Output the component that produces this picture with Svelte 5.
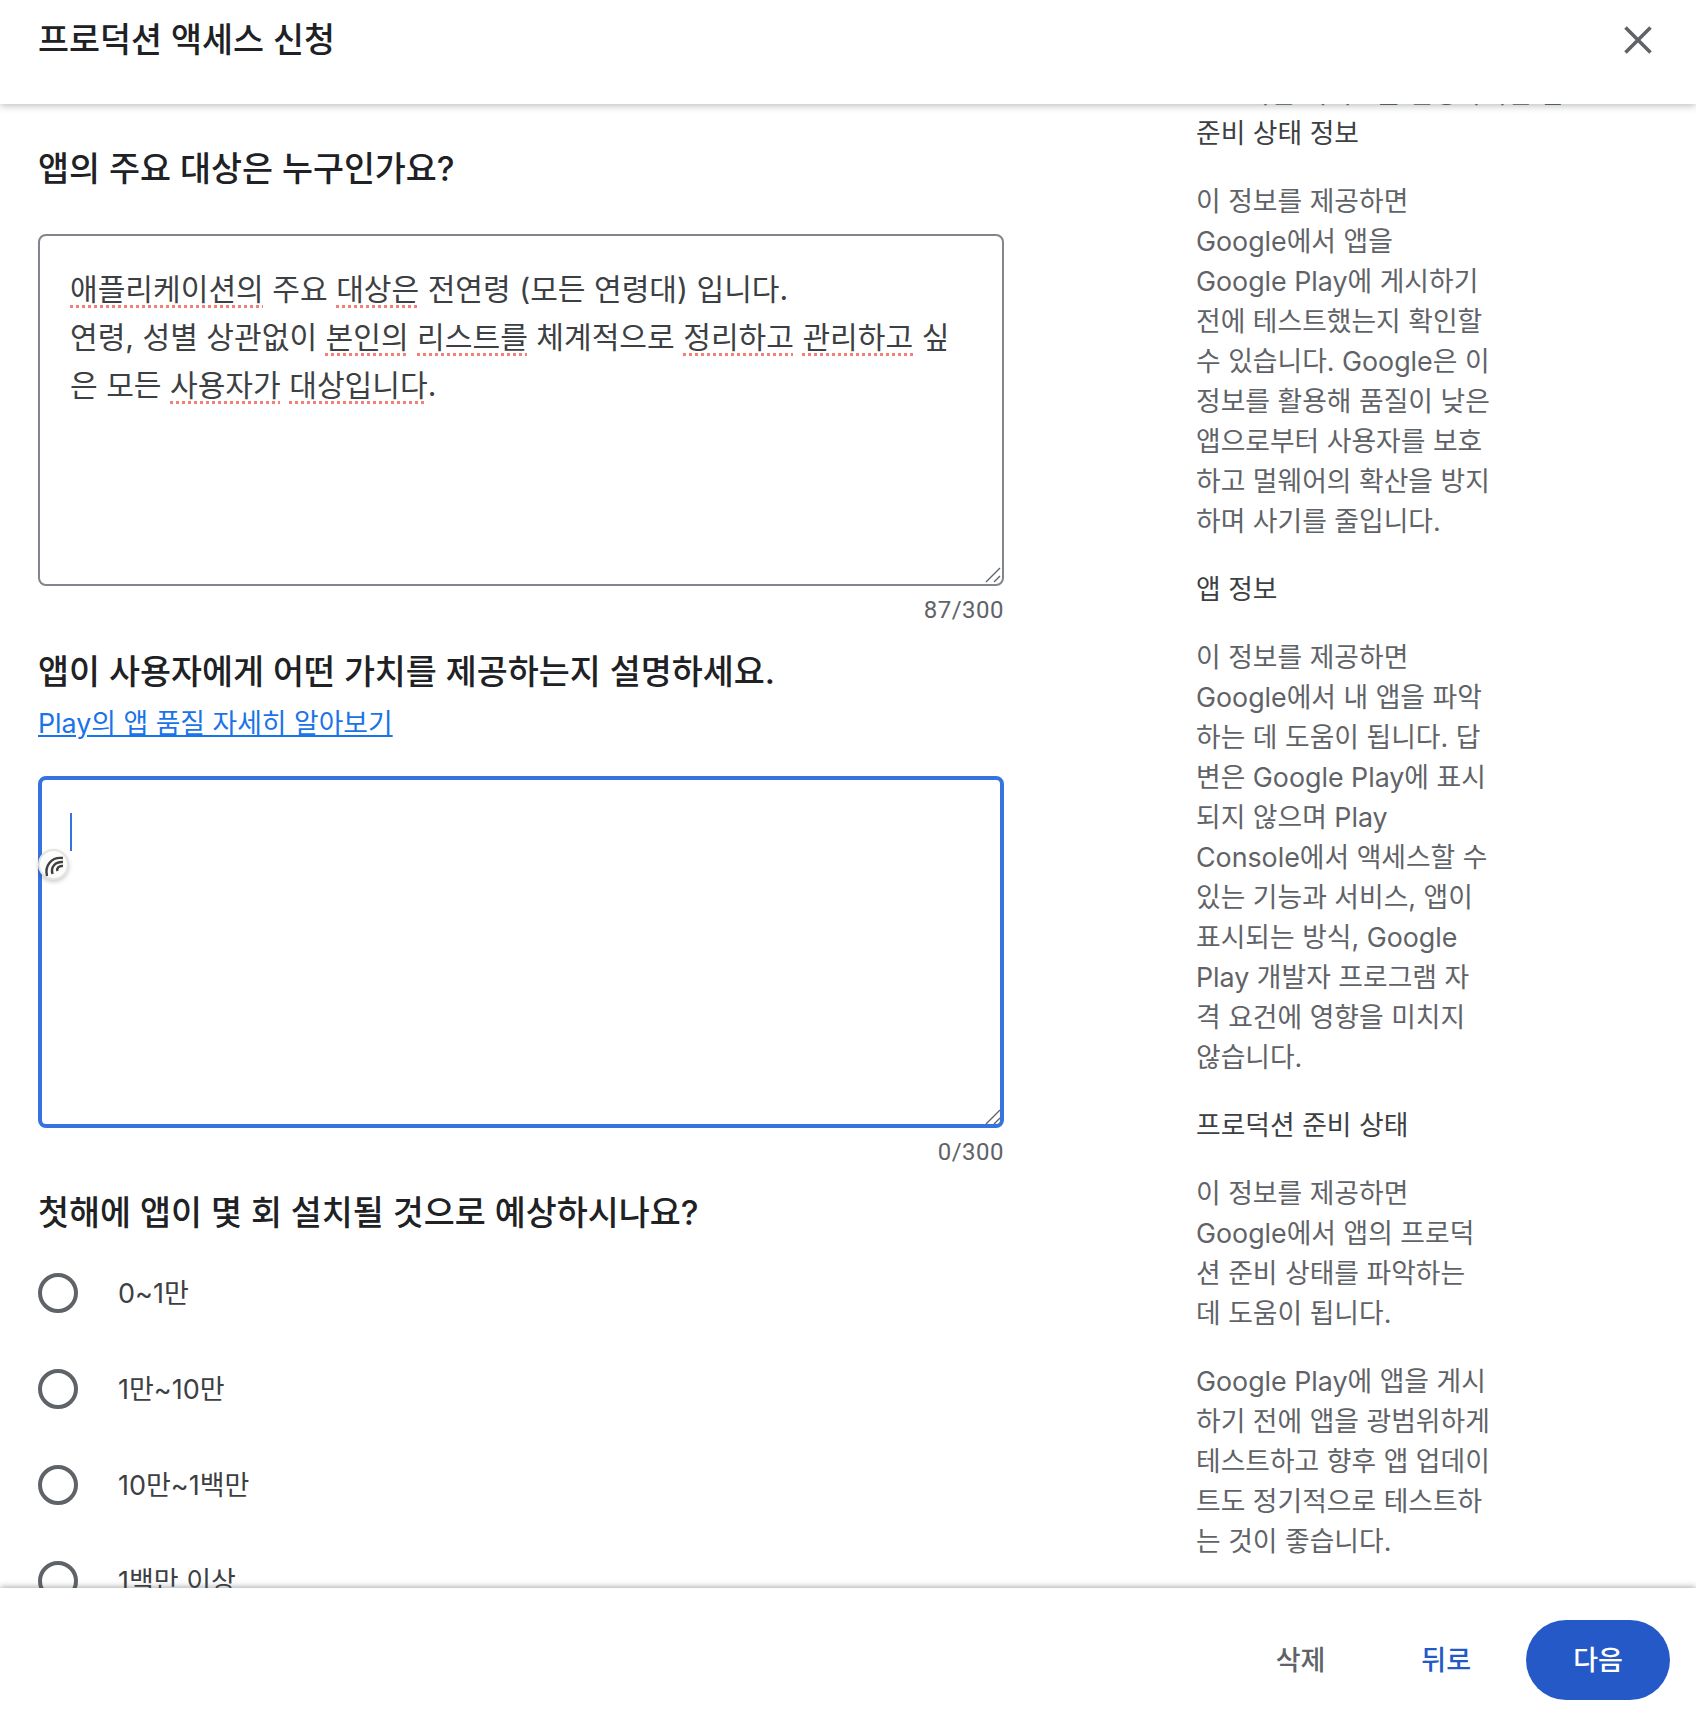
<script>
	const sections = [
		{ title: '준비 상태 정보', paras: [[
			'이 정보를 제공하면', 'Google에서 앱을', 'Google Play에 게시하기', '전에 테스트했는지 확인할',
			'수 있습니다. Google은 이', '정보를 활용해 품질이 낮은', '앱으로부터 사용자를 보호',
			'하고 멀웨어의 확산을 방지', '하며 사기를 줄입니다.'
		]] },
		{ title: '앱 정보', paras: [[
			'이 정보를 제공하면', 'Google에서 내 앱을 파악', '하는 데 도움이 됩니다. 답', '변은 Google Play에 표시',
			'되지 않으며 Play', 'Console에서 액세스할 수', '있는 기능과 서비스, 앱이', '표시되는 방식, Google',
			'Play 개발자 프로그램 자', '격 요건에 영향을 미치지', '않습니다.'
		]] },
		{ title: '프로덕션 준비 상태', paras: [
			['이 정보를 제공하면', 'Google에서 앱의 프로덕', '션 준비 상태를 파악하는', '데 도움이 됩니다.'],
			['Google Play에 앱을 게시', '하기 전에 앱을 광범위하게', '테스트하고 향후 앱 업데이', '트도 정기적으로 테스트하', '는 것이 좋습니다.']
		] }
	];
	const installs = ['0~1만', '1만~10만', '10만~1백만', '1백만 이상'];
</script>

<div class="dialog">
	<header class="top">
		<h1>프로덕션 액세스 신청</h1>
		<button class="close" aria-label="닫기">
			<svg viewBox="0 0 28 28" width="28" height="28"><path d="M1.5 1.5 L26.5 26.5 M26.5 1.5 L1.5 26.5" stroke="#5f6368" stroke-width="3.6" fill="none" /></svg>
		</button>
	</header>

	<main class="body">
		<section class="form">
			<h2 class="first">앱의 주요 대상은 누구인가요?</h2>
			<div class="area">
				<div><span class="sq">애플리케이션의</span> 주요 <span class="sq">대상은</span> 전연령 (모든 연령대) 입니다.</div>
				<div>연령, 성별 상관없이 <span class="sq">본인의</span> <span class="sq">리스트를</span> 체계적으로 <span class="sq">정리하고</span> <span class="sq">관리하고</span> 싶</div>
				<div>은 모든 <span class="sq">사용자가</span> <span class="sq">대상입니다</span>.</div>
				<svg class="grip" viewBox="0 0 16 16" width="16" height="16"><path d="M1 15 L15 1 M9 15 L15 9" stroke="#5f6368" stroke-width="1.4" fill="none" /></svg>
			</div>
			<div class="count">87/300</div>

			<h2 class="second">앱이 사용자에게 어떤 가치를 제공하는지 설명하세요.</h2>
			<a class="link" href="#quality">Play의 앱 품질 자세히 알아보기</a>
			<div class="area focused">
				<span class="caret"></span>
				<span class="badge">
					<svg viewBox="0 0 24 24" width="24" height="24"><path d="M5 23 C2.5 13 9 3.5 21 5 M10.5 21 C8.5 14 13 8.5 21 9 M15.5 18 C14.5 15 17 12.5 21 13" stroke="#404040" stroke-width="2.4" fill="none" /></svg>
				</span>
				<svg class="grip" viewBox="0 0 16 16" width="16" height="16"><path d="M1 15 L15 1 M9 15 L15 9" stroke="#5f6368" stroke-width="1.4" fill="none" /></svg>
			</div>
			<div class="count">0/300</div>

			<h2 class="third">첫해에 앱이 몇 회 설치될 것으로 예상하시나요?</h2>
			<div class="radios">
				{#each installs as label}
					<label class="radio"><span class="ring"></span><span class="txt">{label}</span></label>
				{/each}
			</div>
		</section>

		<aside class="help">
			<p class="cut">프로덕션 액세스를 신청하려면 앱</p>
			{#each sections as s}
				<h3>{s.title}</h3>
				{#each s.paras as lines}
					<p>
						{#each lines as line}<span class="ln">{line}</span>{/each}
					</p>
				{/each}
			{/each}
		</aside>
	</main>

	<footer class="bottom">
		<button class="btn del">삭제</button>
		<button class="btn back">뒤로</button>
		<button class="btn next">다음</button>
	</footer>
</div>

<style>
	:global(body) {
		margin: 0;
		background: #fff;
	}
	.dialog {
		height: 1724px;
		display: flex;
		flex-direction: column;
		overflow: hidden;
		background: #fff;
		color: #202124;
		font-family: Inter, 'Noto Sans CJK KR', sans-serif;
	}
	.top {
		position: relative;
		z-index: 2;
		flex: 0 0 104px;
		box-sizing: border-box;
		display: flex;
		justify-content: space-between;
		padding: 20px 44px 0 38px;
		background: #fff;
		box-shadow: 0 1px 8px rgba(60, 64, 67, 0.4);
	}
	h1 {
		margin: 0;
		font-size: 33.7px;
		line-height: 40px;
		font-weight: 500;
	}
	.close {
		width: 28px;
		height: 28px;
		margin-top: 6px;
		padding: 0;
		border: none;
		background: none;
	}
	.body {
		flex: 1;
		min-height: 0;
		overflow: hidden;
		display: grid;
		grid-template-columns: 966px 300px;
		column-gap: 192px;
		padding-left: 38px;
	}
	.form {
		min-width: 0;
	}
	h2 {
		margin: 0;
		font-size: 33.7px;
		line-height: 44px;
		font-weight: 500;
	}
	h2.first { margin-top: 43px; margin-bottom: 43px; }
	h2.second { margin-top: 22px; }
	h2.third { margin-top: 21px; margin-bottom: 28px; }
	.area {
		position: relative;
		box-sizing: border-box;
		height: 352px;
		padding: 29px 30px 22px;
		border: 2px solid #80868b;
		border-radius: 8px;
		font-size: 30.1px;
		line-height: 48px;
		color: #3c4043;
	}
	.area.focused {
		padding: 26px 30px;
		border: 4px solid #3574e0;
	}
	.sq {
		text-decoration: underline dotted #f28077 3px;
		text-underline-offset: 5px;
	}
	.grip {
		position: absolute;
		right: 1px;
		bottom: 1px;
	}
	.focused .grip {
		right: -1px;
		bottom: -1px;
	}
	.caret {
		display: block;
		width: 2px;
		height: 38px;
		margin-top: 7px;
		margin-left: -2px;
		background: #3574e0;
	}
	.badge {
		position: absolute;
		left: -4px;
		top: 69px;
		box-sizing: border-box;
		width: 31px;
		height: 31px;
		display: flex;
		align-items: center;
		justify-content: center;
		border-radius: 50%;
		background: #fdfdfc;
		border: 2px solid #e4e4e2;
		box-shadow: 0 2px 4px rgba(0, 0, 0, 0.2);
	}
	.count {
		margin-top: 6px;
		font-family: Roboto, sans-serif;
		font-size: 24px;
		line-height: 36px;
		letter-spacing: 0.5px;
		text-align: right;
		color: #5f6368;
	}
	.link {
		display: block;
		margin: 8px 0 32px;
		font-size: 26.8px;
		line-height: 42px;
		color: #1a73e8;
		text-decoration: underline;
	}
	.radios {
		display: flex;
		flex-direction: column;
		gap: 36px;
	}
	.radio {
		display: flex;
		align-items: center;
		gap: 40px;
		height: 60px;
		font-size: 27px;
		color: #3c4043;
	}
	.txt {
		margin-top: -3px;
	}
	.ring {
		box-sizing: border-box;
		width: 40px;
		height: 40px;
		border: 4.5px solid #5f6368;
		border-radius: 50%;
	}
	.help {
		margin-top: -31px;
		font-size: 26.8px;
		line-height: 40px;
		color: #5f6368;
	}
	.help p {
		margin: 0 0 28px;
	}
	.help p.cut {
		margin: 0;
		white-space: nowrap;
	}
	.ln {
		display: block;
		white-space: nowrap;
	}
	h3 {
		margin: 0 0 28px;
		font: inherit;
		color: #3c4043;
	}
	.bottom {
		position: relative;
		z-index: 2;
		flex: 0 0 136px;
		box-sizing: border-box;
		display: flex;
		align-items: center;
		justify-content: flex-end;
		padding: 8px 26px 0 0;
		background: #fff;
		box-shadow: 0 -1px 6px rgba(60, 64, 67, 0.45);
	}
	.btn {
		height: 80px;
		padding: 0 45px 4px;
		border: none;
		border-radius: 40px;
		background: none;
		font: inherit;
		font-size: 27px;
		font-weight: 500;
	}
	.del { color: #5f6368; margin-right: 6px; }
	.back { color: #2259c7; margin-right: 10px; }
	.next {
		width: 144px;
		padding: 0 0 4px;
		background: #2559c7;
		color: #fff;
	}
</style>
